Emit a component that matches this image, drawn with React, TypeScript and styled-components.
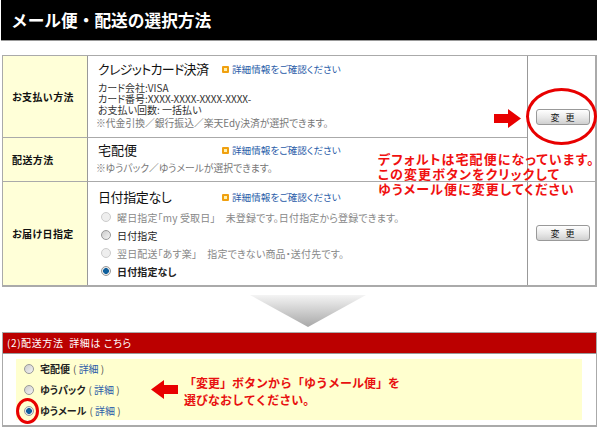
import React from 'react';
import styled, { createGlobalStyle } from 'styled-components';

const Global = createGlobalStyle`
  html, body { margin: 0; padding: 0; background: #fff; }
  body { font-family: "Noto Sans CJK JP", "Liberation Sans", sans-serif; font-feature-settings: "palt"; }
`;

const Page = styled.div`
  position: relative;
  width: 600px;
  height: 438px;
  overflow: hidden;
  background: #fff;
`;

const Header = styled.h1`
  box-sizing: border-box;
  margin: 0 3px 14px 1px;
  height: 41px;
  padding-left: 10px;
  background: #000;
  border-bottom: 1px solid #999;
  color: #fff;
  font-size: 16.7px;
  font-weight: 700;
  line-height: 40px;
  font-feature-settings: normal;
`;

const Table = styled.div`
  box-sizing: border-box;
  display: grid;
  grid-template-columns: 85px 439px 68px;
  grid-template-rows: 82px 44px 103px;
  width: 595px;
  margin-left: 2px;
  border: 1px solid #aaa;
  border-width: 1px 2px 2px 1px;
`;

const Label = styled.div<{ $last?: boolean }>`
  display: flex;
  align-items: center;
  padding-left: 9px;
  background: #ffffd8;
  border-right: 1px solid #999;
  border-bottom: ${p => (p.$last ? 'none' : '1px solid #aaa')};
  color: #111;
  font-size: 10px;
  font-weight: 700;
  letter-spacing: 0.4px;
`;

const Cell = styled.div<{ $last?: boolean; $top: number }>`
  box-sizing: border-box;
  padding: ${p => p.$top}px 0 0 10px;
  border-bottom: ${p => (p.$last ? 'none' : '1px solid #aaa')};
`;

const ActionCell = styled.div<{ $span?: number; $last?: boolean; $top: number }>`
  grid-row: span ${p => p.$span ?? 1};
  box-sizing: border-box;
  display: flex;
  justify-content: center;
  align-items: flex-start;
  padding-top: ${p => p.$top}px;
  padding-left: 2px;
  border-left: 1px solid #999;
  border-bottom: ${p => (p.$last ? 'none' : '1px solid #aaa')};
`;

const TitleRow = styled.div`
  display: flex;
  align-items: center;
  height: 20px;
`;

const Title = styled.span<{ $track?: number }>`
  width: 124px;
  color: #111;
  font-size: 13px;
  line-height: 20px;
  letter-spacing: ${p => p.$track ?? 0}px;
`;

const InfoLink = styled.span`
  display: inline-flex;
  align-items: center;
  gap: 3px;
  color: #2a5ca8;
  font-size: 9.6px;
`;

const Bullet = styled.i`
  box-sizing: border-box;
  width: 7px;
  height: 7px;
  background: #fff2b0;
  border: 2px solid #f0a010;
  border-radius: 1px;
`;

const Detail = styled.div`
  margin-top: 3px;
  color: #333;
  font-size: 10px;
  line-height: 11px;
`;

const Note = styled.div`
  margin: 2px 0 0 -2px;
  color: #777;
  font-size: 9.8px;
  line-height: 13px;
`;

const ChangeButton = styled.button`
  box-sizing: border-box;
  width: 54px;
  height: 16px;
  padding: 0;
  background: linear-gradient(#fff, #e8e8e8 55%, #d0d0d0);
  border: 1px solid #999;
  border-radius: 3px;
  color: #111;
  font-family: inherit;
  font-size: 9px;
  line-height: 13px;
  letter-spacing: 6px;
  text-indent: 6px;
`;

const DateOptions = styled.div`
  display: flex;
  flex-direction: column;
  margin-top: 1px;
  padding-left: 3px;
`;

const Option = styled.div<{ $muted?: boolean; $strong?: boolean }>`
  display: flex;
  align-items: center;
  gap: 6px;
  height: 18px;
  color: ${p => (p.$muted ? '#888' : '#222')};
  font-size: 10px;
  font-weight: ${p => (p.$strong ? 700 : 400)};
  letter-spacing: 0.15px;
  white-space: pre;
`;

const Radio = styled.span<{ $on?: boolean; $faint?: boolean }>`
  flex: none;
  box-sizing: border-box;
  width: 10px;
  height: 10px;
  border-radius: 50%;
  border: 1px solid ${p => (p.$faint ? '#ccc' : '#999')};
  background: ${p =>
    p.$on
      ? 'radial-gradient(circle, #0f5f9c 0 2.6px, #e8e8e8 3.2px)'
      : p.$faint
        ? '#eee'
        : 'linear-gradient(135deg, #ccc, #f4f4f4)'};
`;

const Funnel = styled.svg`
  display: block;
  width: 116px;
  height: 32px;
  margin: 8px 0 5px 250px;
`;

const Panel = styled.section`
  box-sizing: border-box;
  width: 595px;
  height: 95px;
  margin-left: 2px;
  border: 1px solid #aaa;
  border-width: 1px 1px 2px 1px;
`;

const PanelHead = styled.div`
  box-sizing: border-box;
  height: 21px;
  padding-left: 4px;
  background: #bb0000;
  border-bottom: 1px solid #999;
  color: #fff;
  font-size: 10px;
  line-height: 20px;
  letter-spacing: 0.6px;
  white-space: pre;
`;

const PanelBody = styled.div`
  display: flex;
  align-items: center;
  height: 61px;
  margin: 5px 14px 0 13px;
  background: #ffffcf;
`;

const ShipList = styled.div`
  display: flex;
  flex-direction: column;
  gap: 2px;
  width: 136px;
  padding-left: 8px;
`;

const ShipRow = styled.div`
  display: flex;
  align-items: center;
  gap: 6px;
  height: 19px;
  color: #222;
  font-size: 10px;
  font-weight: 700;
`;

const DetailLink = styled.span`
  margin-left: 3px;
  color: #555;
  font-weight: 400;
  b { color: #2a5ca8; font-weight: 400; }
`;

const PanelNote = styled.div`
  margin-left: 24px;
  padding-top: 3px;
  color: #e81010;
  font-size: 12px;
  font-weight: 700;
  line-height: 17px;
  font-feature-settings: normal;
`;

const RedRing = styled.div<{ $l: number; $t: number; $w: number; $h: number; $b: number }>`
  position: absolute;
  left: ${p => p.$l}px;
  top: ${p => p.$t}px;
  box-sizing: border-box;
  width: ${p => p.$w}px;
  height: ${p => p.$h}px;
  border: ${p => p.$b}px solid #e80000;
  border-radius: 50%;
`;

const Callout = styled.div`
  position: absolute;
  left: 378px;
  top: 151px;
  color: #f01010;
  font-size: 13px;
  font-weight: 700;
  line-height: 15px;
  letter-spacing: 1.1px;
  white-space: nowrap;
`;

const ArrowIcon = styled.svg<{ $l: number; $t: number }>`
  position: absolute;
  left: ${p => p.$l}px;
  top: ${p => p.$t}px;
`;

const Link = () => (
  <InfoLink>
    <Bullet />
    詳細情報をご確認ください
  </InfoLink>
);

export default function App() {
  return (
    <Page>
      <Global />
      <Header>メール便・配送の選択方法</Header>
      <Table>
        <Label>お支払い方法</Label>
        <Cell $top={3}>
          <TitleRow>
            <Title $track={-0.7}>クレジットカード決済</Title>
            <Link />
          </TitleRow>
          <Detail>
            カード会社:VISA
            <br />
            カード番号:XXXX-XXXX-XXXX-XXXX-
            <br />
            お支払い回数: 一括払い
          </Detail>
          <Note>※代金引換／銀行振込／楽天Edy決済が選択できます。</Note>
        </Cell>
        <ActionCell $span={2} $top={53}>
          <ChangeButton>変更</ChangeButton>
        </ActionCell>
        <Label>配送方法</Label>
        <Cell $top={2}>
          <TitleRow>
            <Title>宅配便</Title>
            <Link />
          </TitleRow>
          <Note>※ゆうパック／ゆうメールが選択できます。</Note>
        </Cell>
        <Label $last>お届け日指定</Label>
        <Cell $last $top={5}>
          <TitleRow>
            <Title $track={-0.4}>日付指定なし</Title>
            <Link />
          </TitleRow>
          <DateOptions>
            <Option $muted>
              <Radio $faint />
              {'曜日指定「my 受取日」　未登録です。日付指定から登録できます。'}
            </Option>
            <Option>
              <Radio />
              日付指定
            </Option>
            <Option $muted>
              <Radio $faint />
              {'翌日配送「あす楽」　指定できない商品・送付先です。'}
            </Option>
            <Option $strong>
              <Radio $on />
              日付指定なし
            </Option>
          </DateOptions>
        </Cell>
        <ActionCell $last $top={43}>
          <ChangeButton>変更</ChangeButton>
        </ActionCell>
      </Table>
      <Funnel viewBox="0 0 116 32">
        <defs>
          <linearGradient id="fade" x1="0" y1="0" x2="0" y2="1">
            <stop offset="0" stopColor="#f4f4f4" />
            <stop offset="1" stopColor="#a8a8a8" />
          </linearGradient>
        </defs>
        <polygon points="0,0 116,0 58,32" fill="url(#fade)" />
      </Funnel>
      <Panel>
        <PanelHead>{'(2)配送方法  詳細は こちら'}</PanelHead>
        <PanelBody>
          <ShipList>
            <ShipRow>
              <Radio />
              <span>
                宅配便
                <DetailLink>
                  ( <b>詳細</b> )
                </DetailLink>
              </span>
            </ShipRow>
            <ShipRow>
              <Radio />
              <span>
                ゆうパック
                <DetailLink>
                  ( <b>詳細</b> )
                </DetailLink>
              </span>
            </ShipRow>
            <ShipRow>
              <Radio $on />
              <span>
                ゆうメール
                <DetailLink>
                  ( <b>詳細</b> )
                </DetailLink>
              </span>
            </ShipRow>
          </ShipList>
          <PanelNote>
            「変更」ボタンから「ゆうメール便」を
            <br />
            選びなおしてください。
          </PanelNote>
        </PanelBody>
      </Panel>

      <RedRing $l={526} $t={88} $w={71} $h={57} $b={3} />
      <RedRing $l={16} $t={398} $w={23} $h={26} $b={3} />
      <Callout>
        デフォルトは宅配便になっています。
        <br />
        この変更ボタンをクリックして
        <br />
        ゆうメール便に変更してください
      </Callout>
      <ArrowIcon $l={494} $t={109} width={27} height={19} viewBox="0 0 27 19">
        <polygon points="0,5 14,5 14,0 27,9.5 14,19 14,14 0,14" fill="#e80000" />
      </ArrowIcon>
      <ArrowIcon $l={151} $t={380} width={27} height={19} viewBox="0 0 27 19">
        <polygon points="27,5 13,5 13,0 0,9.5 13,19 13,14 27,14" fill="#e80000" />
      </ArrowIcon>
    </Page>
  );
}
